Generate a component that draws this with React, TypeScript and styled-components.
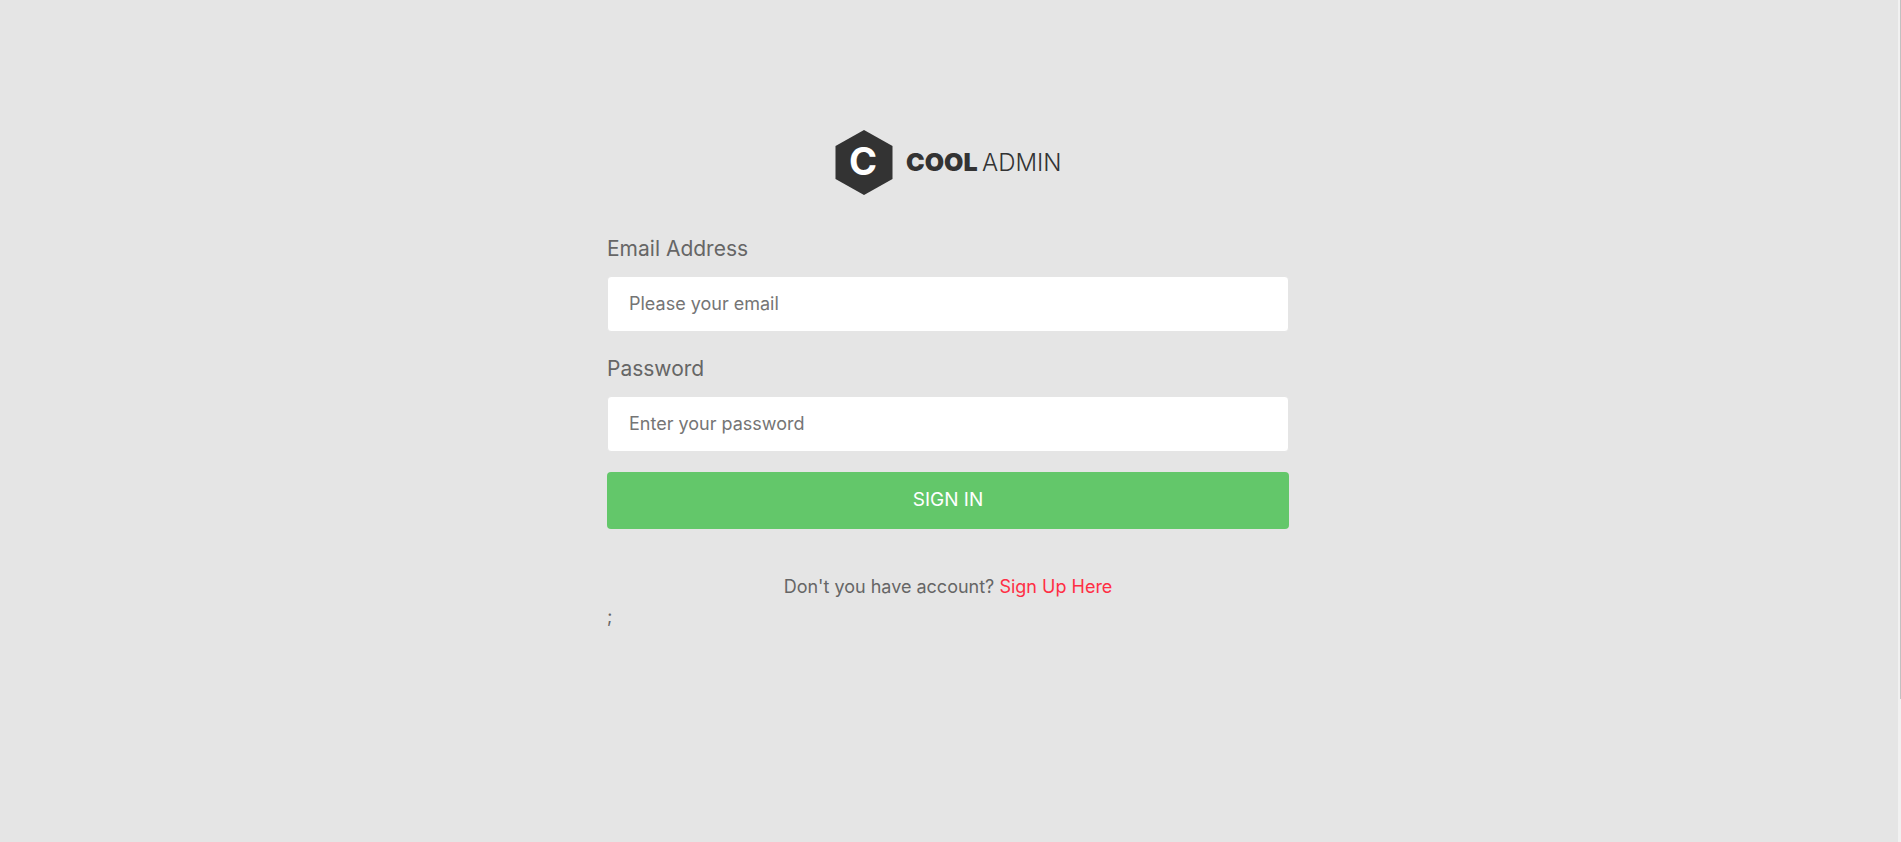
import React from "react";
import styled, { createGlobalStyle } from "styled-components";

const GlobalStyle = createGlobalStyle`
  *, *::before, *::after { box-sizing: border-box; }
  body {
    margin: 0;
    background: #e5e5e5;
    color: #666;
    font-family: Inter, "Open Sans", sans-serif;
    font-weight: 400;
    font-size: 18px;
    line-height: 30px;
  }
`;

const Page = styled.div`
  display: flex;
  min-height: 100vh;
`;

const Content = styled.main`
  flex: 1;
  padding: 130px 2px 40px 0;
`;

const ScrollRail = styled.div`
  width: 3px;
  padding-left: 2px;
  background: #f1f1f1;
`;

const ScrollThumb = styled.div`
  height: 83vh;
  background: #c1c1c1;
`;

const LoginPanel = styled.section`
  width: 100%;
  max-width: 682px;
  margin: 0 auto;
`;

const LogoLink = styled.a`
  display: block;
  width: 226px;
  margin: 0 auto 36px;
`;

const LogoMark = styled.svg`
  display: block;
  width: 226px;
  height: 66px;
  overflow: visible;
  fill: #333;
  font-family: Inter, sans-serif;
`;

const Field = styled.div`
  margin-bottom: 20px;
`;

const Label = styled.label`
  display: block;
  padding: 2px 0 12px;
  font-size: 21px;
`;

const TextInput = styled.input`
  display: block;
  width: 100%;
  height: 56px;
  padding: 0 21px 2px;
  border: 1px solid #e5e5e5;
  border-radius: 4px;
  background: #fff;
  color: #666;
  font: inherit;
  &::placeholder {
    color: #757575;
    opacity: 1;
  }
`;

const SubmitButton = styled.button`
  display: block;
  width: 100%;
  height: 57px;
  padding: 0 0 2px;
  border: 0;
  border-radius: 4px;
  background: #63c76a;
  color: #fff;
  font: inherit;
  font-size: 19px;
  cursor: pointer;
`;

const SignUpPrompt = styled.p`
  margin: 43px 0 0;
  text-align: center;
`;

const SignUpLink = styled.a`
  color: #ff2e44;
  text-decoration: none;
`;

const Trailing = styled.div``;

export default function App() {
  return (
    <>
      <GlobalStyle />
      <Page>
        <Content>
          <LoginPanel>
            <LogoLink href="#" aria-label="Cool Admin">
              <LogoMark viewBox="0 0 226 66">
                <path d="M29 0 57.500 16V49L29 65 .5 49V16Z" />
                <text x="28" y="45" textAnchor="middle" fontSize="38" fontWeight="700" fill="#fff">C</text>
                <text x="71" y="41" fontSize="25" fontWeight="900">COOL</text>
                <text x="147" y="41" fontSize="24" fontWeight="300">ADMIN</text>
              </LogoMark>
            </LogoLink>
            <form onSubmit={(event) => event.preventDefault()}>
              <Field>
                <Label htmlFor="email">Email Address</Label>
                <TextInput id="email" type="email" placeholder="Please your email" />
              </Field>
              <Field>
                <Label htmlFor="password">Password</Label>
                <TextInput id="password" type="password" placeholder="Enter your password" />
              </Field>
              <SubmitButton type="submit">SIGN IN</SubmitButton>
            </form>
            <SignUpPrompt>
              Don't you have account? <SignUpLink href="#">Sign Up Here</SignUpLink>
            </SignUpPrompt>
            <Trailing>;</Trailing>
          </LoginPanel>
        </Content>
        <ScrollRail aria-hidden="true">
          <ScrollThumb />
        </ScrollRail>
      </Page>
    </>
  );
}
